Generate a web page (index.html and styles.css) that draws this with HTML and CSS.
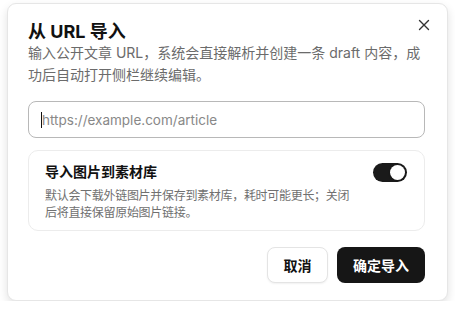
FILE: index.html
```html
<!DOCTYPE html>
<html lang="zh">
<head>
  <meta charset="UTF-8" />
  <title>从 URL 导入</title>
  <link rel="stylesheet" href="styles.css">
</head>
<body>
  <div class="dialog">
    <button class="close" aria-label="关闭">
      <svg width="12" height="12" viewBox="0 0 12 12"><path d="M1.5 1.5l9 9M10.5 1.5l-9 9" stroke="#333" stroke-width="1.4" stroke-linecap="round"/></svg>
    </button>
    <h2 class="title">从 URL 导入</h2>
    <p class="desc">输入公开文章 URL，系统会直接解析并创建一条 draft 内容，成功后自动打开侧栏继续编辑。</p>
    <div class="url-input"><span class="caret"></span><span class="placeholder">https://example.com/article</span></div>
    <div class="option">
      <div class="option-text">
        <div class="option-title">导入图片到素材库</div>
        <div class="option-desc">默认会下载外链图片并保存到素材库，耗时可能更长；关闭后将直接保留原始图片链接。</div>
      </div>
      <div class="toggle"><span class="knob"></span></div>
    </div>
    <div class="actions">
      <button class="btn cancel">取消</button>
      <button class="btn primary">确定导入</button>
    </div>
  </div>
</body>
</html>
```

FILE: styles.css
```css
body {
  margin: 0;
  background: #fff;
  font-family: Inter, "Noto Sans CJK SC", sans-serif;
  color: #111;
}

.dialog {
  position: relative;
  box-sizing: border-box;
  width: 441px;
  height: 298px;
  margin: 3px 0 0 7px;
  padding: 16px 22px 0 20px;
  background: #fff;
  border: 1px solid #e6e6e6;
  border-radius: 9px;
  box-shadow: 0 4px 10px rgba(0, 0, 0, 0.12);
}

.close {
  position: absolute;
  top: 15px;
  right: 17px;
  padding: 0;
  border: 0;
  background: none;
  display: flex;
}

.title {
  margin: 0;
  font-size: 18px;
  line-height: 24px;
  font-weight: 700;
}

.desc {
  margin: -2px 0 0;
  font-size: 14px;
  line-height: 22px;
  color: #6b6b6b;
}

.url-input {
  box-sizing: border-box;
  height: 37px;
  margin-top: 15px;
  border: 1px solid #b8b8b8;
  border-radius: 8px;
  display: flex;
  align-items: center;
  padding-left: 12px;
  font-size: 13.5px;
  color: #888;
}

.caret {
  width: 1px;
  height: 16px;
  background: #111;
}

.option {
  box-sizing: border-box;
  height: 81px;
  margin-top: 12px;
  border: 1px solid #ececec;
  border-radius: 10px;
  padding: 11px 17px 0 16px;
  display: flex;
  justify-content: space-between;
  align-items: flex-start;
}

.option-text {
  width: 310px;
}

.option-title {
  font-size: 14px;
  font-weight: 700;
  line-height: 20px;
}

.option-desc {
  margin-top: 5px;
  font-size: 12px;
  line-height: 17px;
  letter-spacing: -0.3px;
  color: #707070;
}

.toggle {
  position: relative;
  width: 34px;
  height: 19px;
  margin-top: 1px;
  border-radius: 10px;
  background: #1a1a1a;
}

.knob {
  position: absolute;
  top: 2px;
  right: 2px;
  width: 15px;
  height: 15px;
  border-radius: 50%;
  background: #fff;
  box-shadow: 0 1px 2px rgba(0, 0, 0, 0.25);
}

.actions {
  display: flex;
  justify-content: flex-end;
  gap: 9px;
  margin-top: 16px;
}

.btn {
  box-sizing: border-box;
  height: 36px;
  border-radius: 8px;
  font-family: inherit;
  font-size: 14px;
  font-weight: 700;
  padding: 0;
  white-space: nowrap;
}

.cancel {
  background: #fff;
  color: #111;
  border: 1px solid #e4e4e4;
  box-shadow: 0 1px 2px rgba(0, 0, 0, 0.06);
  width: 61px;
}

.primary {
  background: #161616;
  color: #fff;
  border: 0;
  width: 88px;
}
```
